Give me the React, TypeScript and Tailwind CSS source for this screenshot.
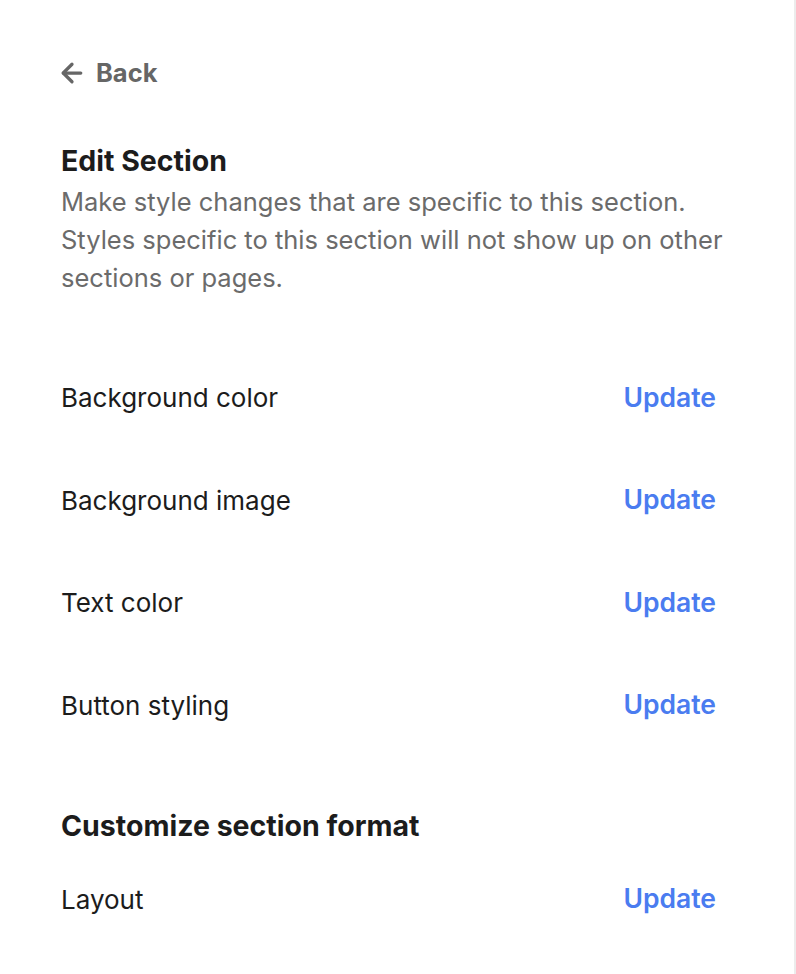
import { ArrowLeft } from "lucide-react";

const styleRows = ["Background color", "Background image", "Text color", "Button styling"];

const Row = ({ label, className = "h-[102.5px]" }: { label: string; className?: string }) => (
  <div className={`flex items-center justify-between ${className}`}>
    <span className="text-[26px] text-[#1c1c1c]">{label}</span>
    <button className="text-[26.5px] font-semibold text-[#4a7cf0]">Update</button>
  </div>
);

export default function App() {
  return (
    <div
      className="min-h-[974px] w-[796px] border-r-2 border-[#ececec] bg-white"
      style={{ fontFamily: "Inter, 'Noto Sans', sans-serif" }}
    >
      <div className="pl-[61px] pr-[78px] pt-[54px]">
        <button className="flex items-center gap-[9px] text-[25.5px] font-bold text-[#666666]">
          <ArrowLeft size={30} strokeWidth={2.6} className="-ml-[4px]" />
          Back
        </button>

        <h2 className="mt-[51px] text-[28.5px] font-bold leading-[36px] text-[#1c1c1c]">Edit Section</h2>
        <p className="mt-[4px] w-[670px] text-[25.5px] leading-[38px] text-[#6b6b6b]">
          Make style changes that are specific to this section. Styles specific to this section will not show up on
          other sections or pages.
        </p>

        <div className="mt-[49px]">
          {styleRows.map((r) => (
            <Row key={r} label={r} />
          ))}
        </div>

        <h2 className="mt-[52px] text-[28.5px] font-bold leading-[36px] text-[#1c1c1c]">Customize section format</h2>
        <Row label="Layout" className="h-[110px]" />
      </div>
    </div>
  );
}
